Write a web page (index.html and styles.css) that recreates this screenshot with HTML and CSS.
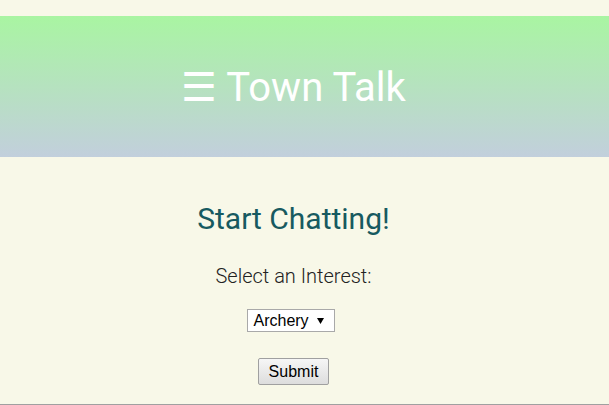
FILE: index.html
```html
<!DOCTYPE html>
<html>
<head>
<meta charset="utf-8">
<link rel="stylesheet" href="styles.css">
</head>
<body>
<div class="page">
  <header class="banner">
    <h1 class="brand">☰ Town Talk</h1>
  </header>
  <main class="content">
    <h2 class="heading">Start Chatting!</h2>
    <form class="form">
      <label class="label" for="interest">Select an Interest:</label>
      <select id="interest" class="select">
        <option>Archery</option>
      </select>
      <button type="button" class="submit">Submit</button>
    </form>
  </main>
</div>
<div class="rule"></div>
</body>
</html>
```
FILE: styles.css
```css
html, body {
  margin: 0;
  padding: 0;
}
body {
  background: #f8f8e8;
  font-family: Roboto, "Noto Sans", sans-serif;
  height: 405px;
  display: flex;
  flex-direction: column;
}
.page {
  flex: 1;
  display: flex;
  flex-direction: column;
}
.banner {
  margin-top: 16px;
  height: 141px;
  background: linear-gradient(to bottom, #a9f5a2, #c2cfdc);
  display: flex;
  align-items: center;
  padding-right: 22px;
  justify-content: center;
}
.brand {
  margin: 2px 0 0;
  color: #fff;
  font-weight: 400;
  font-size: 40px;
  line-height: 1;
}
.content {
  flex: 1;
  width: 587px;
  display: flex;
  flex-direction: column;
  align-items: center;
}
.heading {
  margin: 47px 0 0;
  font-size: 30px;
  font-weight: 400;
  color: #175a60;
  line-height: 1;
}
.form {
  display: flex;
  flex-direction: column;
  align-items: center;
}
.label {
  margin-top: 32px;
  font-size: 20px;
  font-weight: 300;
  color: #222;
  line-height: 1;
}
.select {
  margin-top: 23px;
  margin-right: 4px;
  -webkit-appearance: none;
  appearance: none;
  box-sizing: border-box;
  width: 88px;
  height: 23px;
  padding: 0 0 0 5px;
  font-family: "Liberation Sans", Arial, sans-serif;
  font-size: 16px;
  color: #000;
  border: 1px solid #a9a9a9;
  border-radius: 0;
  background: #fff url("data:image/svg+xml,%3Csvg xmlns='http://www.w3.org/2000/svg' width='7' height='6'%3E%3Cpath d='M0 0H7L3.5 6Z' fill='%23000'/%3E%3C/svg%3E") no-repeat 69px 8px;
}
.submit {
  margin-top: 26px;
  box-sizing: border-box;
  width: 71px;
  height: 27px;
  padding: 0;
  font-family: "Liberation Sans", Arial, sans-serif;
  font-size: 16px;
  border: 1px solid #a0a0a0;
  border-radius: 2px;
  background: linear-gradient(#f6f6f6, #dddddd);
  color: #000;
}
.rule {
  height: 1px;
  background: #a0a0a0;
}
```
